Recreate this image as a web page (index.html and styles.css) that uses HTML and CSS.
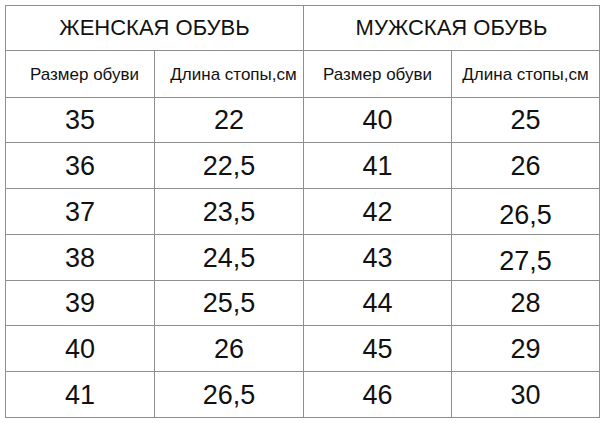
FILE: index.html
```html
<!DOCTYPE html>
<html lang="ru">
<head>
<meta charset="utf-8">
<title>Таблица размеров обуви</title>
<link rel="stylesheet" href="styles.css">
</head>
<body>
<table class="sizes">
  <colgroup>
    <col class="c1"><col class="c2"><col class="c3"><col class="c4">
  </colgroup>
  <tr class="title-row">
    <th colspan="2">ЖЕНСКАЯ ОБУВЬ</th>
    <th colspan="2">МУЖСКАЯ ОБУВЬ</th>
  </tr>
  <tr class="sub-row">
    <th class="shift">Размер обуви</th>
    <th class="shift">Длина стопы,см</th>
    <th>Размер обуви</th>
    <th>Длина стопы,см</th>
  </tr>
  <tr class="r1"><td>35</td><td>22</td><td>40</td><td>25</td></tr>
  <tr class="r2"><td>36</td><td>22,5</td><td>41</td><td>26</td></tr>
  <tr class="r3"><td>37</td><td>23,5</td><td>42</td><td class="low">26,5</td></tr>
  <tr class="r4"><td>38</td><td>24,5</td><td>43</td><td class="low">27,5</td></tr>
  <tr class="r5"><td>39</td><td>25,5</td><td>44</td><td>28</td></tr>
  <tr class="r6"><td>40</td><td>26</td><td>45</td><td>29</td></tr>
  <tr class="r7"><td>41</td><td>26,5</td><td>46</td><td>30</td></tr>
</table>
</body>
</html>
```
FILE: styles.css
```css
html, body {
  margin: 0;
  padding: 0;
  background: #ffffff;
}
body {
  padding: 5px 0 0 5px;
  font-family: "Liberation Sans", Arial, sans-serif;
  color: #111111;
}
.sizes {
  border-collapse: collapse;
  table-layout: fixed;
  width: 594px;
}
.sizes col.c1 { width: 149px; }
.sizes col.c2 { width: 149px; }
.sizes col.c3 { width: 148px; }
.sizes col.c4 { width: 148px; }
.sizes th,
.sizes td {
  border: 1px solid #8e8e8e;
  padding: 0;
  text-align: center;
  vertical-align: middle;
  font-weight: normal;
  line-height: 1.1;
}
.title-row { height: 45px; }
.title-row th {
  font-size: 22px;
}
.sub-row { height: 47px; }
.sub-row th {
  font-size: 17px;
  padding-top: 3px;
}
.sub-row th.shift {
  padding-left: 9px;
}
.sizes tr.r1,
.sizes tr.r5 { height: 45px; }
.sizes tr.r2,
.sizes tr.r3,
.sizes tr.r4,
.sizes tr.r6,
.sizes tr.r7 { height: 46px; }
.sizes td {
  font-size: 27px;
  padding-top: 2px;
}
.sizes td.low {
  padding-top: 9px;
}
```
